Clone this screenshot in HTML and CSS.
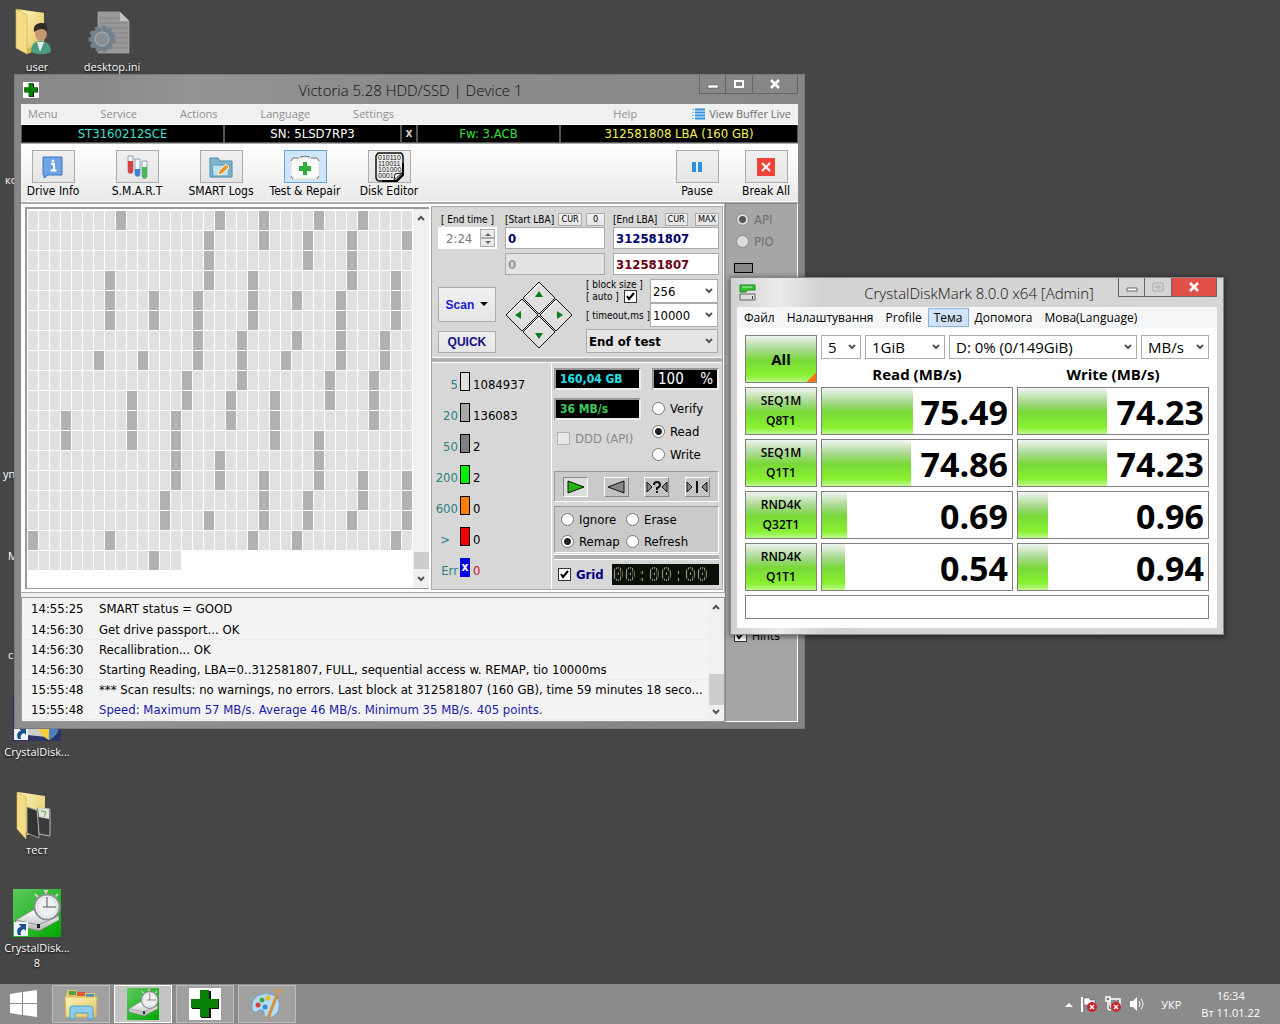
FILE: index.html
```html
<!DOCTYPE html>
<html lang="uk">
<head>
    <meta charset="UTF-8">
    <meta name="viewport" content="width=device-width, initial-scale=1.0">
    <title>Desktop</title>
    <link rel="stylesheet" href="styles.css">
</head>
<body>
    <svg class="defs" aria-hidden="true">
        <defs>
            <linearGradient id="folderFill" x1="0" y1="0" x2="1" y2="1">
                <stop offset="0" stop-color="#fdf3b8"/>
                <stop offset="1" stop-color="#e2c45f"/>
            </linearGradient>
            <linearGradient id="greenFill" x1="0" y1="0" x2="1" y2="1">
                <stop offset="0" stop-color="#5fc95f"/>
                <stop offset="1" stop-color="#00a800"/>
            </linearGradient>
            <linearGradient id="driveFill" x1="0" y1="0" x2="0" y2="1">
                <stop offset="0" stop-color="#ffffff"/>
                <stop offset="1" stop-color="#b4b4b4"/>
            </linearGradient>
            <symbol id="diskmark" viewBox="0 0 48 48">
                <rect width="48" height="48" fill="url(#greenFill)"/>
                <path d="M3 31 L20 21 L46 27 L46 31 L26 42 L3 36Z" fill="url(#driveFill)" stroke="#777" stroke-width=".6"/>
                <path d="M3 31 L25 36 L46 27 M25 36 V42" fill="none" stroke="#888" stroke-width=".8"/>
                <rect x="24" y="35" width="3" height="4" fill="#222"/>
                <path d="M33 6V2M31 2h4M25 8l-3-3M42 8l3-3" stroke="#ccc" stroke-width="2"/>
                <circle cx="34" cy="18" r="12.500" fill="#eef0f2" stroke="#8b9196" stroke-width="2"/>
                <circle cx="34" cy="18" r="9.500" fill="none" stroke="#9aa" stroke-width="1" stroke-dasharray="1 2"/>
                <path d="M34 8V18H43M30 18h4" stroke="#555" stroke-width="1" fill="none"/>
            </symbol>
            <symbol id="shortcut" viewBox="0 0 14 14">
                <rect width="14" height="14" fill="#eef3f8"/>
                <path d="M4 13C2 8 4 5 7 5L5 2H12V9L10 7C7 8 6 10 7 13Z" fill="#1d4f8c"/>
            </symbol>
            <symbol id="cross" viewBox="0 0 32 32">
                <rect width="32" height="32" fill="#fff"/>
                <path d="M12 3h10v8h8v10h-8v9H12v-9H3V11h9z" fill="#111"/>
                <path d="M11 2h9v9h9v9h-9v9h-9v-9H2v-9h9z" fill="#088008"/>
            </symbol>
        </defs>
    </svg>

    <main class="desktop">
        <!-- desktop icons -->
        <a class="shortcut user" href="#">
            <svg width="48" height="48" viewBox="0 0 48 48">
                <path d="M5 1 L31 5 V40 L14 46Z" fill="#d7b84d"/>
                <path d="M7 2 L31 5 V38 L14 40Z" fill="url(#folderFill)"/>
                <path d="M3 1 L14 7 V46 L3 40Z" fill="#f5dd86" stroke="#d2b456" stroke-width=".7"/>
                <path d="M18 44C18 36 22 33 28 33S38 37 38 44C32 47 24 47 18 44Z" fill="#4a9c7d"/>
                <path d="M24 34l3 10 4-10z" fill="#e6f3f0"/>
                <ellipse cx="28" cy="25" rx="6" ry="8" fill="#c49873"/>
                <path d="M21 24C20 17 24 15 29 15S35 19 34 25C32 20 27 20 21 24Z" fill="#2e2a26"/>
            </svg>
            <span>user</span>
        </a>
        <a class="shortcut ini" href="#">
            <svg width="48" height="48" viewBox="0 0 48 48">
                <path d="M10 4H32L41 13V45H10Z" fill="#989898" stroke="#adadad" stroke-width=".7"/>
                <path d="M12 10h19M12 15h27M12 20h28M12 25h28M12 30h28M12 35h28M12 40h28" stroke="#848484" stroke-width="1"/>
                <path d="M32 4V13H41Z" fill="#c4c4c4"/>
                <circle cx="14" cy="31" r="9" fill="none" stroke="#75818d" stroke-width="5"/>
                <circle cx="14" cy="31" r="12" fill="none" stroke="#75818d" stroke-width="3" stroke-dasharray="4 3"/>
                <circle cx="14" cy="31" r="7" fill="#8c8f92" stroke="#a8b2bc"/>
            </svg>
            <span>desktop.ini</span>
        </a>
        <span class="hidden-label label-a">ко</span>
        <span class="hidden-label label-b">уп</span>
        <span class="hidden-label label-c">M</span>
        <span class="hidden-label label-d">с</span>
        <a class="shortcut info" href="#">
            <svg width="48" height="48" viewBox="0 0 48 48">
                <rect width="48" height="48" fill="#29356b"/>
                <path d="M10 30L40 38L34 44L14 42Z" fill="#ccc"/>
                <path d="M26 26h19v10c0 6-9 11-9 11s-10-5-10-11z" fill="#f3cf3c"/>
                <path d="M36 26h9v10c0 6-9 11-9 11z" fill="#4a7fc2"/>
                <use href="#shortcut" x="1" y="33" width="14" height="14"/>
            </svg>
            <span>CrystalDisk...</span>
        </a>
        <a class="shortcut test" href="#">
            <svg width="48" height="48" viewBox="0 0 48 48">
                <path d="M5 1L32 5V40L14 44Z" fill="url(#folderFill)"/>
                <path d="M14 16L26 20V47L14 42Z" fill="#333" stroke="#999" stroke-width="1"/>
                <path d="M24 17L37 18V45L26 43Z" fill="#3a3a3a" stroke="#bbb" stroke-width="1"/>
                <path d="M25 17L36 18V28L26 26Z" fill="#dfe8d8"/>
                <path d="M28 20l5 1-2 5" stroke="#5faa4c" fill="none"/>
                <path d="M4 1L13 6V48L4 38Z" fill="#f5dd86" stroke="#d2b456" stroke-width=".7"/>
            </svg>
            <span>тест</span>
        </a>
        <a class="shortcut mark" href="#">
            <svg width="48" height="48" viewBox="0 0 48 48">
                <use href="#diskmark" width="48" height="48"/>
                <use href="#shortcut" x="1" y="33" width="14" height="14"/>
            </svg>
            <span>CrystalDisk...<br>8</span>
        </a>

        <!-- Victoria -->
        <section class="window victoria">
            <header class="titlebar">
                <svg class="title-icon" width="16" height="16"><use href="#cross"/></svg>
                <h1>Victoria 5.28 HDD/SSD | Device 1</h1>
                <div class="win-buttons">
                    <button aria-label="Minimize"><svg width="12" height="12"><path d="M1 7h10v3H1z" fill="#fff" stroke="#555" stroke-width=".5"/></svg></button>
                    <button aria-label="Maximize"><svg width="12" height="12"><path d="M2 3h8v6H2z" fill="none" stroke="#fff" stroke-width="2"/></svg></button>
                    <button aria-label="Close" class="wide"><svg width="12" height="12"><path d="M2 2l8 8M10 2l-8 8" stroke="#fff" stroke-width="2.500"/></svg></button>
                </div>
            </header>
            <nav class="menubar">
                <a href="#">Menu</a>
                <a href="#">Service</a>
                <a href="#">Actions</a>
                <a href="#">Language</a>
                <a href="#">Settings</a>
                <a href="#" class="help">Help</a>
                <a href="#" class="buffer">
                    <svg width="13" height="13"><path d="M3 1.500h10M3 4.500h10M3 7.500h10M3 10.500h10" stroke="#2e90e0" stroke-width="2"/><path d="M0 1.500h2M0 4.500h2M0 7.500h2M0 10.500h2" stroke="#7ab8ea" stroke-width="1"/></svg>
                    View Buffer Live
                </a>
            </nav>
            <div class="drive-bar">
                <span class="cyan">ST3160212SCE</span>
                <span>SN: 5LSD7RP3</span>
                <button>x</button>
                <span class="green">Fw: 3.ACB</span>
                <span class="yellow">312581808 LBA (160 GB)</span>
            </div>
            <div class="toolbar">
                <label class="tool"><button><svg width="22" height="24"><path d="M1 2h19v18H6l-4 3v-3H1z" fill="#6fa3e6" stroke="#3d74bb"/><circle cx="11" cy="6" r="1.500" fill="#fff"/><path d="M9 9h3v6M8.500 15.500h6" stroke="#fff" stroke-width="2" fill="none"/></svg></button><span>Drive Info</span></label>
                <label class="tool"><button><svg width="22" height="26"><g stroke="#8fa3b5" stroke-width="1"><path d="M2 2h5v15a2.500 2.500 0 0 1-5 0z" fill="#f3f6fa"/><path d="M9 5h5v15a2.500 2.500 0 0 1-5 0z" fill="#f3f6fa"/><path d="M16 7h5v15a2.500 2.500 0 0 1-5 0z" fill="#f3f6fa"/></g><path d="M2 7h5v10a2.500 2.500 0 0 1-5 0z" fill="#dd4040"/><path d="M9 15h5v5a2.500 2.500 0 0 1-5 0z" fill="#3f80d0"/><path d="M16 13h5v9a2.500 2.500 0 0 1-5 0z" fill="#48b858"/></svg></button><span>S.M.A.R.T</span></label>
                <label class="tool"><button><svg width="26" height="24"><path d="M2 3h8l2 3h12v16H2z" fill="#7fb4cc" stroke="#4c88a5"/><path d="M4 10h18l-2 11H5z" fill="#bfe0ee" stroke="#5f9bb7"/><path d="M10 20l1-4 7-7 3 3-7 7z" fill="#ef9420" stroke="#fff" stroke-width=".8"/></svg></button><span>SMART Logs</span></label>
                <label class="tool active"><button><svg width="32" height="28"><rect x="2" y="5" width="28" height="21" rx="2" fill="#fafafa" stroke="#dcdcdc"/><path d="M2 8l2-3h6M30 8l-2-3h-6M11 4q5-2 10 0M2 23l2 3M30 23l-2 3" fill="none" stroke="#777"/><path d="M14 9h4v4h4v5h-4v4h-4v-4h-4v-5h4z" fill="#2fae3e"/></svg></button><span>Test &amp; Repair</span></label>
                <label class="tool"><button><svg width="32" height="32"><path d="M5 2h23q2 1 2 4v17l-7 7H7q-4 0-4-4V5z" fill="#eee" stroke="#111" stroke-width="1.500"/><path d="M30 12v12l-6 6H9" fill="none" stroke="#000" stroke-width="2"/><g font-family="Liberation Sans" font-size="7" fill="#222"><text x="5" y="9">010110</text><text x="5" y="15">110011</text><text x="5" y="21">101000</text><text x="5" y="27">0001</text></g><path d="M21 29l1-6 7-1z" fill="#fff" stroke="#111"/></svg></button><span>Disk Editor</span></label>
                <label class="tool first-right"><button><svg width="12" height="12"><path d="M1 1h4v10H1zM7 1h4v10H7z" fill="#2f8fdf"/></svg></button><span>Pause</span></label>
                <label class="tool near"><button><svg width="18" height="18"><path d="M0 0h18v18H0z" fill="#ec4238"/><path d="M5 5l8 8M13 5l-8 8" stroke="#fff" stroke-width="2"/></svg></button><span>Break All</span></label>
            </div>

            <div class="client">
                <div class="left">
                    <div class="work">
                        <div class="map">
                            <div class="blocks" id="blocks"></div>
                            <div class="scroll">
                                <svg width="8" height="6"><path d="M1 5l3-3 3 3" fill="none" stroke="#555" stroke-width="2"/></svg>
                                <i></i>
                                <svg width="8" height="6"><path d="M1 1l3 3 3-3" fill="none" stroke="#555" stroke-width="2"/></svg>
                            </div>
                        </div>
                        <div class="controls">
                            <div class="range">
                                <div class="col">
                                    <label for="endTime" class="cap">[ End time ]</label>
                                    <div class="spin">
                                        <input id="endTime" value="2:24" disabled>
                                        <div class="spin-buttons">
                                            <button aria-label="Up"><svg width="6" height="4"><path d="M0 4l3-3 3 3z" fill="#666"/></svg></button>
                                            <button aria-label="Down"><svg width="6" height="4"><path d="M0 0l3 3 3-3z" fill="#666"/></svg></button>
                                        </div>
                                    </div>
                                </div>
                                <div class="col">
                                    <div class="cap"><label for="startLba">[Start LBA]</label><button>CUR</button><button>0</button></div>
                                    <input id="startLba" class="lba" value="0">
                                    <input class="lba off" aria-label="Current start" value="0" disabled>
                                </div>
                                <div class="col">
                                    <div class="cap"><label for="endLba">[End LBA]</label><button>CUR</button><button>MAX</button></div>
                                    <input id="endLba" class="lba" value="312581807">
                                    <input class="lba last" aria-label="Current end" value="312581807">
                                </div>
                            </div>
                            <div class="run">
                                <div class="run-buttons">
                                    <button class="scan">Scan <svg width="8" height="5"><path d="M0 0h8l-4 4z" fill="#000"/></svg></button>
                                    <button class="quick">QUICK</button>
                                </div>
                                <svg class="dpad" width="68" height="68" viewBox="0 0 68 68">
                                    <g fill="#e0e0e0" stroke="#111" stroke-width="1">
                                        <path d="M34 1L50 17 34 33 18 17z"/>
                                        <path d="M17 18L33 34 17 50 1 34z"/>
                                        <path d="M51 18L67 34 51 50 35 34z"/>
                                        <path d="M34 35L50 51 34 67 18 51z"/>
                                    </g>
                                    <path d="M20 17L34 3M3 34L17 20M37 34L51 20M20 51L34 37" stroke="#fff"/>
                                    <path d="M34 10l4 6h-8zM34 58l4-6h-8zM10 34l6-4v8zM58 34l-6-4v8z" fill="#0d7a1e"/>
                                </svg>
                                <div class="options">
                                    <div class="size-row">
                                        <div class="auto">
                                            <label for="blockSize">[ block size ]</label>
                                            <div><label for="auto">[ auto ]</label><input type="checkbox" id="auto" checked></div>
                                        </div>
                                        <select id="blockSize"><option>256</option></select>
                                    </div>
                                    <div class="size-row">
                                        <label for="timeout">[ timeout,ms ]</label>
                                        <select id="timeout"><option>10000</option></select>
                                    </div>
                                    <select class="finish" aria-label="At end"><option>End of test</option></select>
                                </div>
                            </div>
                            <div class="divider"></div>
                            <div class="lower">
                                <table class="stats">
                                    <tr><th>5</th><td><i class="swatch s5"></i></td><td>1084937</td></tr>
                                    <tr><th>20</th><td><i class="swatch s20"></i></td><td>136083</td></tr>
                                    <tr><th>50</th><td><i class="swatch s50"></i></td><td>2</td></tr>
                                    <tr><th>200</th><td><i class="swatch s200"></i></td><td>2</td></tr>
                                    <tr><th>600</th><td><i class="swatch s600"></i></td><td>0</td></tr>
                                    <tr><th class="more">&gt;</th><td><i class="swatch sred"></i></td><td>0</td></tr>
                                    <tr><th>Err</th><td><i class="swatch serr">x</i></td><td class="red">0</td></tr>
                                </table>
                                <div class="modes">
                                    <div class="readout">
                                        <div class="lcds">
                                            <output class="lcd aqua">160,04 GB</output>
                                            <output class="lcd lime">36 MB/s</output>
                                            <label class="ddd"><input type="checkbox" disabled>DDD (API)</label>
                                        </div>
                                        <div class="kinds">
                                            <output class="lcd percent"><span>100</span><span>%</span></output>
                                            <label><input type="radio" name="kind">Verify</label>
                                            <label><input type="radio" name="kind" checked>Read</label>
                                            <label><input type="radio" name="kind">Write</label>
                                        </div>
                                    </div>
                                    <div class="inset player">
                                        <button class="pressed" aria-label="Forward"><svg width="20" height="16"><path d="M2 2l16 6-16 6z" fill="#23b50c" stroke="#111"/></svg></button>
                                        <button aria-label="Backward"><svg width="20" height="16"><path d="M18 2L2 8l16 6z" fill="#888" stroke="#111"/></svg></button>
                                        <button aria-label="Random"><svg width="24" height="16"><path d="M2 3l5 5-5 5zM22 3l-5 5 5 5z" fill="#888" stroke="#111"/><path d="M9 6q0-3 3-3t3 3q0 2-3 3v2M12 12v2" stroke="#111" stroke-width="2" fill="none"/></svg></button>
                                        <button aria-label="Butterfly"><svg width="24" height="16"><path d="M2 3l5 5-5 5zM22 3l-5 5 5 5z" fill="#888" stroke="#111"/><path d="M12 2v12" stroke="#111" stroke-width="2"/></svg></button>
                                    </div>
                                    <div class="inset errors">
                                        <label><input type="radio" name="onerr">Ignore</label>
                                        <label><input type="radio" name="onerr">Erase</label>
                                        <label><input type="radio" name="onerr" checked>Remap</label>
                                        <label><input type="radio" name="onerr">Refresh</label>
                                    </div>
                                    <div class="divider"></div>
                                    <div class="grid-row">
                                        <label><input type="checkbox" checked>Grid</label>
                                        <output class="timer"><span>00:00:00</span></output>
                                    </div>
                                </div>
                            </div>
                        </div>
                    </div>
                    <div class="log">
                        <table>
                            <tr><td>14:55:25</td><td>SMART status = GOOD</td></tr>
                            <tr><td>14:56:30</td><td>Get drive passport... OK</td></tr>
                            <tr><td>14:56:30</td><td>Recallibration... OK</td></tr>
                            <tr><td>14:56:30</td><td>Starting Reading, LBA=0..312581807, FULL, sequential access w. REMAP, tio 10000ms</td></tr>
                            <tr><td>15:55:48</td><td>*** Scan results: no warnings, no errors. Last block at 312581807 (160 GB), time 59 minutes 18 seco...</td></tr>
                            <tr><td>15:55:48</td><td class="speed">Speed: Maximum 57 MB/s. Average 46 MB/s. Minimum 35 MB/s. 405 points.</td></tr>
                        </table>
                        <div class="scroll">
                            <svg width="8" height="6"><path d="M1 5l3-3 3 3" fill="none" stroke="#555" stroke-width="2"/></svg>
                            <i></i>
                            <svg width="8" height="6"><path d="M1 1l3 3 3-3" fill="none" stroke="#555" stroke-width="2"/></svg>
                        </div>
                    </div>
                </div>
                <aside class="side">
                    <label class="off"><input type="radio" name="bus" checked disabled>API</label>
                    <label class="off"><input type="radio" name="bus" disabled>PIO</label>
                    <i class="led"></i>
                    <label class="hints"><input type="checkbox" checked>Hints</label>
                </aside>
            </div>
        </section>

        <!-- CrystalDiskMark -->
        <section class="window crystal">
            <header class="titlebar">
                <svg class="title-icon" width="18" height="18"><path d="M1 1h15v5H8l-1 2H1z" fill="#35c435" stroke="#178a17"/><path d="M3 3h10" stroke="#b8f0b8"/><path d="M1 10h15v6H1z" fill="#ddd" stroke="#666"/><path d="M13 12h1v3h-1z" fill="#333"/></svg>
                <h1>CrystalDiskMark 8.0.0 x64 [Admin]</h1>
                <div class="win-buttons">
                    <button aria-label="Minimize"><svg width="14" height="12"><path d="M2 7h10v3H2z" fill="#fff" stroke="#666"/></svg></button>
                    <button aria-label="Maximize" disabled><svg width="12" height="12"><path d="M1 2h10v8H1zM4 5h4v2H4z" fill="none" stroke="#aaa"/></svg></button>
                    <button aria-label="Close" class="wide close"><svg width="12" height="12"><path d="M2 2l8 8M10 2l-8 8" stroke="#fff" stroke-width="2.500"/></svg></button>
                </div>
            </header>
            <nav class="menubar">
                <a href="#">Файл</a>
                <a href="#">Налаштування</a>
                <a href="#">Profile</a>
                <a href="#" class="hot">Тема</a>
                <a href="#">Допомога</a>
                <a href="#">Мова(Language)</a>
            </nav>
            <div class="bench">
                <table>
                    <tr class="picks">
                        <td rowspan="2"><button class="go all">All</button></td>
                        <td colspan="2">
                            <div class="selects">
                                <select class="count" aria-label="Count"><option>5</option></select>
                                <select class="size" aria-label="Size"><option>1GiB</option></select>
                                <select class="drive" aria-label="Drive"><option>D: 0% (0/149GiB)</option></select>
                                <select class="unit" aria-label="Unit"><option>MB/s</option></select>
                            </div>
                        </td>
                    </tr>
                    <tr class="heads"><th>Read (MB/s)</th><th>Write (MB/s)</th></tr>
                    <tr>
                        <td><button class="go">SEQ1M<br>Q8T1</button></td>
                        <td><div class="score"><i style="width: 48%"></i>75.49</div></td>
                        <td><div class="score"><i style="width: 47%"></i>74.23</div></td>
                    </tr>
                    <tr>
                        <td><button class="go">SEQ1M<br>Q1T1</button></td>
                        <td><div class="score"><i style="width: 47%"></i>74.86</div></td>
                        <td><div class="score"><i style="width: 47%"></i>74.23</div></td>
                    </tr>
                    <tr>
                        <td><button class="go">RND4K<br>Q32T1</button></td>
                        <td><div class="score"><i style="width: 13%"></i>0.69</div></td>
                        <td><div class="score"><i style="width: 16%"></i>0.96</div></td>
                    </tr>
                    <tr>
                        <td><button class="go">RND4K<br>Q1T1</button></td>
                        <td><div class="score"><i style="width: 12%"></i>0.54</div></td>
                        <td><div class="score"><i style="width: 16%"></i>0.94</div></td>
                    </tr>
                </table>
                <input class="comment" aria-label="Comment">
            </div>
        </section>
    </main>

    <footer class="taskbar">
        <button class="start" aria-label="Start"><svg width="28" height="28"><path d="M0 4l12-2v11H0zM13 2l14-2v13H13zM0 14h12v11L0 23zM13 14h14v13l-14-2z" fill="#fff"/></svg></button>
        <button class="task" aria-label="Explorer"><svg width="34" height="32"><path d="M2 6l2-4h8l2 3h17v24H2z" fill="#e5c766"/><path d="M5 3h7v4H5z" fill="#4ba04b"/><path d="M13 4h8v4h-8z" fill="#d55d3a"/><path d="M22 6h8v3h-8z" fill="#4590c8"/><path d="M1 9h32l-1 20H2z" fill="url(#folderFill)" stroke="#d4b75a"/><path d="M6 31V20q0-2 3-2h17q3 0 3 2v11h-5v-6H11v6z" fill="#8fcbed" stroke="#4aa0cf"/></svg></button>
        <button class="task current" aria-label="CrystalDiskMark"><svg width="32" height="32"><use href="#diskmark"/></svg></button>
        <button class="task" aria-label="Victoria"><svg width="32" height="32"><use href="#cross"/></svg></button>
        <button class="task" aria-label="Paint"><svg width="34" height="32"><path d="M2 18C2 9 10 5 19 6s11 7 10 14-8 11-13 9c-4-2 0-6-4-7s-4 3-7 2-3-3-3-6z" fill="#b4dcf4" stroke="#6fa6cc"/><circle cx="8" cy="17" r="2.500" fill="#d8413a"/><circle cx="12" cy="12" r="2.500" fill="#3fa548"/><circle cx="18" cy="10" r="2.500" fill="#f0b92c"/><circle cx="15" cy="19" r="2.500" fill="#4288c8"/><path d="M27 7L18 30" stroke="#e08a32" stroke-width="3"/><path d="M24 2q5-3 9 0l-5 6z" fill="#c49a67"/></svg></button>
        <div class="tray">
            <svg width="8" height="5"><path d="M0 5l4-4 4 4z" fill="#fff"/></svg>
            <svg width="16" height="16"><path d="M1 1v15" stroke="#fff" stroke-width="2"/><path d="M3 2h6v2h5v7H8V9H3z" fill="#fff" stroke="#555" stroke-width=".5"/><circle cx="11" cy="11" r="5" fill="#c8262c"/><path d="M9 9l4 4M13 9l-4 4" stroke="#fff" stroke-width="1.500"/></svg>
            <svg width="16" height="16"><path d="M5 3h10v8H5zM7 14h5" fill="none" stroke="#fff" stroke-width="1.500"/><path d="M1 1h4v4H1zM3 5v7q0 2 3 2" fill="#777" stroke="#fff" stroke-width="1.500"/><circle cx="11" cy="11" r="5" fill="#c8262c"/><path d="M9 9l4 4M13 9l-4 4" stroke="#fff" stroke-width="1.500"/></svg>
            <svg width="16" height="16"><path d="M1 5h3l4-4v14l-4-4H1z" fill="#fff"/><path d="M10 5q2 3 0 6M12 3q4 5 0 10" fill="none" stroke="#fff" stroke-width="1"/></svg>
            <span class="lang">УКР</span>
            <time>16:34<br>Вт 11.01.22</time>
        </div>
    </footer>
    <script src="script.js"></script>
</body>
</html>
```

FILE: script.js
```js
// slow blocks by row, every other block is fast
const slow = [
    [8, 17, 21, 26, 30],
    [16, 21, 25, 29, 34],
    [16, 25, 29],
    [7, 16, 20, 29, 33],
    [7, 11, 15, 20, 24, 28, 33],
    [7, 11, 15, 20, 28, 33],
    [15, 19, 24, 28, 32],
    [6, 10, 15, 19, 23, 28, 32],
    [14, 19, 27, 31],
    [9, 14, 18, 22, 27, 31],
    [3, 9, 13, 18, 22, 31],
    [3, 9, 13, 22, 26],
    [13, 17, 26],
    [13, 17, 21, 26, 30, 34],
    [12, 21, 25, 30, 34],
    [12, 16, 21, 25, 29, 34],
    [0, 7, 20, 24, 33],
    [11]
];
const columns = 35;
const lastRow = 14;
const blocks = document.getElementById('blocks');

slow.forEach((marks, row) => {
    const count = row === slow.length - 1 ? lastRow : columns;
    for (let i = 0; i < count; i++) {
        const cell = document.createElement('i');
        if (marks.includes(i)) cell.className = 'slow';
        blocks.appendChild(cell);
    }
});
```

FILE: styles.css
```css
* {
    box-sizing: border-box;
}
body {
    margin: 0;
    min-height: 100vh;
    display: flex;
    flex-direction: column;
    background: #464646;
    font-family: "DejaVu Sans Condensed", "Open Sans", sans-serif;
    font-size: 12px;
    color: #000;
    overflow: hidden;
}
button, input, select {
    font: inherit;
    color: inherit;
    margin: 0;
    padding: 0;
    border-radius: 0;
}
button {
    display: flex;
    align-items: center;
    justify-content: center;
    border: 1px solid #acacac;
    background: linear-gradient(#f0f0f0, #e5e5e5);
}
a {
    color: inherit;
    text-decoration: none;
}
svg {
    flex: none;
}
table {
    border-collapse: collapse;
}
td, th {
    padding: 0;
}
.defs {
    position: absolute;
    width: 0;
    height: 0;
}
select {
    appearance: none;
    border: 1px solid #acacac;
    background: #fff url("data:image/svg+xml,%3Csvg xmlns='http://www.w3.org/2000/svg' width='8' height='6'%3E%3Cpath d='M1 1l3 3 3-3' fill='none' stroke='%23555' stroke-width='2'/%3E%3C/svg%3E") no-repeat right 4px center;
}
input[type="radio"], input[type="checkbox"] {
    appearance: none;
    flex: none;
    width: 13px;
    height: 13px;
    border: 1px solid #777;
    background: #fff;
}
input[type="radio"] {
    border-radius: 50%;
}
input[type="radio"]:checked {
    background: radial-gradient(circle, #222 0 3px, #fff 4px);
}
input[type="checkbox"]:checked {
    border-color: #333;
    background: #fff url("data:image/svg+xml,%3Csvg xmlns='http://www.w3.org/2000/svg' width='9' height='9'%3E%3Cpath d='M1 4l2 3 5-6' fill='none' stroke='%23000' stroke-width='2'/%3E%3C/svg%3E") no-repeat center;
}

/* desktop */
.desktop {
    position: relative;
    flex: 1;
}
.shortcut {
    position: absolute;
    width: 74px;
    display: flex;
    flex-direction: column;
    align-items: center;
    gap: 3px;
    color: #fff;
    font-family: "Open Sans", sans-serif;
    font-size: 11px;
    line-height: 15px;
    text-align: center;
    text-shadow: 0 1px 2px #000;
}
.user { left: 0; top: 8px; }
.ini { left: 75px; top: 8px; }
.info { left: 0; top: 693px; }
.test { left: 0; top: 791px; }
.mark { left: 0; top: 889px; }
.hidden-label {
    position: absolute;
    color: #fff;
    font-family: "Open Sans", sans-serif;
    font-size: 11px;
    line-height: 15px;
}
.label-a { left: 5px; top: 172px; }
.label-b { left: 3px; top: 466px; }
.label-c { left: 8px; top: 548px; }
.label-d { left: 8px; top: 647px; }

/* windows */
.window {
    position: absolute;
    padding: 0 6px 6px;
}
.titlebar {
    display: flex;
    align-items: center;
    height: 29px;
}
.titlebar h1 {
    flex: 1;
    margin: 0;
    padding-left: 83px;
    text-align: center;
    font: 300 15px/26px "Open Sans", sans-serif;
    color: #111;
}
.win-buttons {
    display: flex;
    align-self: flex-start;
}
.win-buttons button {
    width: 27px;
    height: 19px;
    border: 1px solid #666;
    border-top: 0;
    background: none;
}
.win-buttons button + button {
    border-left: 0;
}
.win-buttons .wide {
    width: 45px;
}
.menubar {
    display: flex;
    align-items: center;
    height: 20px;
}
.scroll {
    width: 16px;
    display: flex;
    flex-direction: column;
    align-items: center;
    justify-content: space-between;
    padding: 6px 0;
    background: #f0f0f0;
}
.scroll i {
    width: 15px;
    background: #cdcdcd;
    margin-top: auto;
}

/* Victoria */
.victoria {
    left: 14px;
    top: 74px;
    width: 791px;
    background: linear-gradient(100deg, #868686, #8a8a8a 10%, #949494 20%, #8c8c8c 40%, #858585);
    border: 1px solid #7a7a7a;
}
.victoria .title-icon {
    margin-left: 2px;
}
.victoria .menubar {
    gap: 43px;
    padding: 0 7px;
    background: #f0f0f0;
    color: #8f8f8f;
    font-family: "Open Sans", sans-serif;
    font-size: 11px;
    line-height: 18px;
}
.victoria .help {
    margin-left: auto;
}
.buffer {
    display: flex;
    align-items: center;
    gap: 4px;
    margin-left: 12px;
    color: #6d6d6d;
}
.drive-bar {
    display: grid;
    grid-template-columns: 201px 175px 14px 141px 1fr;
    gap: 2px;
    padding: 0 1px 1px;
    background: #555;
    border-top: 1px solid #fff;
    color: #fff;
    font-size: 13px;
    line-height: 17px;
    text-align: center;
}
.drive-bar span, .drive-bar button {
    background: #000;
}
.drive-bar button {
    border: 0;
    color: #ccc;
    font-size: 12px;
    font-weight: bold;
}
.cyan { color: #3fe0d0; }
.green { color: #35e035; }
.yellow { color: #f4f45a; }
.toolbar {
    display: flex;
    gap: 20px;
    height: 60px;
    padding-top: 6px;
    background: linear-gradient(#fff, #e9e9e9);
    border: solid #aaa;
    border-width: 1px 0;
    box-shadow: inset 0 -1px #fff;
}
.tool {
    width: 64px;
    display: flex;
    flex-direction: column;
    align-items: center;
    white-space: nowrap;
    line-height: 17px;
}
.tool button {
    width: 43px;
    height: 33px;
}
.tool.active button {
    border-color: #6aa4dc;
    background: #cfe5fb;
}
.first-right {
    margin-left: auto;
}
.near {
    margin-left: -15px;
}
.client {
    display: flex;
    background: #f0f0f0;
}
.left {
    flex: 1;
    min-width: 0;
}
.work {
    display: flex;
    gap: 1px;
    padding: 2px;
    border: solid #aaa;
    border-width: 1px 1px 1px 0;
    background: #fff;
    margin-bottom: 4px;
}
.map {
    display: flex;
    flex: 1;
    border: 2px solid #999;
    border-width: 2px 0 1px 2px;
    margin: 1px 1px 1px 2px;
    background: #fff;
}
.blocks {
    flex: 1;
    display: grid;
    grid-template-columns: repeat(35, 10px);
    grid-auto-rows: 19px;
    align-content: start;
    gap: 1px;
    padding: 2px 1px;
}
.blocks i {
    background: #e0e0e0;
}
.blocks .slow {
    background: #b1b1b1;
}
.map .scroll i {
    height: 17px;
    margin-bottom: 7px;
}
.controls {
    width: 292px;
    background: #d7d7d7;
    border: 1px solid #aaa;
}
.range {
    display: grid;
    grid-template-columns: 59px 100px 106px;
    gap: 8px;
    padding: 5px 0 0 6px;
}
.col {
    display: flex;
    flex-direction: column;
    gap: 4px;
}
.cap {
    height: 14px;
    margin-bottom: -3px;
    display: flex;
    align-items: center;
    justify-content: space-between;
    white-space: nowrap;
    font-size: 10px;
}
label.cap {
    justify-content: center;
}
.cap button {
    min-width: 19px;
    height: 13px;
    padding: 0 2px;
    font-size: 9px;
}
.spin {
    display: flex;
    align-items: center;
    height: 22px;
    background: #fff;
    color: #777;
}
.spin input {
    width: 42px;
    border: 0;
    padding-left: 8px;
    background: none;
    font-size: 13px;
}
.spin-buttons button {
    width: 15px;
    height: 9px;
}
.lba {
    width: 100%;
    height: 22px;
    border: 1px solid #aaa;
    padding: 0 2px;
    background: #fff;
    font-weight: bold;
    font-size: 13px;
    color: #00006b;
}
.lba.off {
    background: #e3e3e3;
    color: #999;
}
.lba.last {
    color: #6b0010;
}
.run {
    display: flex;
    padding: 4px 4px 4px 6px;
}
.run-buttons {
    width: 59px;
    display: flex;
    flex-direction: column;
    justify-content: space-between;
    padding-top: 8px;
    font-family: "Liberation Sans", sans-serif;
    font-weight: bold;
}
.scan {
    height: 35px;
    gap: 6px;
    color: #1a1ad0;
}
.quick {
    height: 22px;
    color: #101080;
}
.dpad {
    margin: 2px 0 0 9px;
}
.options {
    flex: 1;
    display: flex;
    flex-direction: column;
    margin-left: 13px;
}
.size-row {
    display: flex;
    justify-content: space-between;
    align-items: center;
    font-size: 10px;
    white-space: nowrap;
}
.size-row select {
    width: 68px;
    height: 24px;
    padding-left: 2px;
    font-size: 13px;
}
.auto div {
    display: flex;
    align-items: center;
    gap: 5px;
}
.finish {
    height: 24px;
    margin-top: 2px;
    padding-left: 2px;
    background-color: #e5e5e5;
    font-weight: bold;
    font-size: 13px;
}
.divider {
    height: 6px;
    background: #b0b0b0;
    border-bottom: 1px solid #fff;
    border-top: 1px solid #fff;
}
.lower {
    display: flex;
}
.stats {
    width: 119px;
    align-self: flex-start;
    margin-top: 3px;
    font-size: 13px;
}
.stats tr {
    height: 31px;
}
.stats th {
    width: 26px;
    text-align: right;
    font-weight: normal;
    color: #2a8080;
    padding-top: 6px;
}
.stats td {
    width: 14px;
}
.stats td:last-child {
    width: auto;
    padding: 6px 0 0 1px;
}
.stats .more {
    padding-right: 8px;
}
.red {
    color: #d02020;
}
.swatch {
    display: block;
    width: 10px;
    height: 19px;
    margin: 0 auto;
    border: 1px solid #000;
}
.s5 { background: #e0e0e0; }
.s20 { background: #a8a8a8; }
.s50 { background: #808080; }
.s200 { background: #00f000; }
.s600 { background: #ff8000; }
.sred { background: #f00000; }
.serr {
    border: 0;
    background: #0000e0;
    color: #fff;
    font: bold 12px/19px "DejaVu Sans Condensed", sans-serif;
    text-align: center;
}
.modes {
    flex: 1;
    padding: 5px 3px 0 2px;
    border-left: 1px solid #fff;
}
.modes label {
    display: flex;
    align-items: center;
    gap: 5px;
    height: 22px;
    font-size: 13px;
}
.readout {
    display: flex;
    justify-content: space-between;
    height: 103px;
}
.lcd {
    display: block;
    height: 22px;
    border: 2px solid #eee;
    border-left-color: #999;
    border-top-color: #999;
    padding: 0 4px;
    background: #000;
    font-weight: bold;
    line-height: 18px;
}
.lcds {
    width: 87px;
    display: flex;
    flex-direction: column;
    gap: 8px;
}
.lcd.aqua {
    color: #20e0e8;
}
.lcd.lime {
    color: #3cc85c;
}
.modes .ddd {
    height: 20px;
    margin-left: 3px;
    color: #888;
}
.ddd input {
    opacity: .4;
}
.kinds {
    width: 67px;
}
.kinds label {
    height: 23px;
}
.lcd.percent {
    display: flex;
    justify-content: space-between;
    margin-bottom: 7px;
    color: #fff;
    font-weight: normal;
    font-size: 15px;
}
.inset {
    border: 1px solid #999;
    border-right-color: #fff;
    border-bottom-color: #fff;
    background: #cacaca;
}
.player {
    display: flex;
    align-items: center;
    justify-content: space-between;
    height: 31px;
    padding: 0 8px;
    margin-bottom: 4px;
}
.player button {
    width: 25px;
    height: 20px;
    border-color: #fff #888 #888 #fff;
    background: #c4c4c4;
}
.player .pressed {
    border-color: #888 #fff #fff #888;
    background: #ddd;
}
.errors {
    display: grid;
    grid-template-columns: 65px 1fr;
    padding: 1px 0 0 6px;
    margin-bottom: 1px;
}
.grid-row {
    display: flex;
    justify-content: space-between;
    align-items: center;
    height: 29px;
    padding-left: 4px;
    color: #000080;
    font-weight: bold;
}
.timer {
    width: 107px;
    height: 21px;
    background: #081008;
    font: 20px/20px "DejaVu Sans Mono", monospace;
}
.timer span {
    background: repeating-linear-gradient(90deg, #9a9a70 0 1px, #222 1px 2px);
    background-clip: text;
    color: transparent;
}
.log {
    display: flex;
    border: 1px solid #999;
    background: #f3f3f3;
    font-size: 13px;
}
.log table {
    flex: 1;
    margin: 1px 0;
}
.log tr {
    height: 20px;
    border-bottom: 1px solid #ececec;
}
.log td {
    white-space: nowrap;
}
.log td:first-child {
    width: 77px;
    padding-left: 9px;
}
.log .speed {
    color: #1a1aa8;
}
.log .scroll i {
    height: 31px;
    margin-bottom: 4px;
}
.side {
    width: 73px;
    display: flex;
    flex-direction: column;
    padding: 4px 0 0 10px;
    background: #a6a6a6;
    border: 1px solid #fff;
    border-top-color: #888;
    border-left-color: #888;
}
.side label {
    display: flex;
    align-items: center;
    gap: 5px;
    height: 22px;
}
.side .off {
    color: #6f6f6f;
    font-size: 13px;
}
.side .off input {
    opacity: .6;
}
.led {
    width: 19px;
    height: 10px;
    margin: 11px 0 0 -2px;
    border: 1px solid #000;
    background: #888;
}
.side .hints {
    margin: auto 0 74px -2px;
}

/* CrystalDiskMark */
.crystal {
    left: 730px;
    top: 277px;
    width: 494px;
    background: linear-gradient(90deg, #d0d0d0, #ebebeb 10%, #d2d2d2 18%, #d6d6d6);
    border: 1px solid #888;
    box-shadow: 0 1px 6px rgba(0, 0, 0, 0.6);
}
.crystal .title-icon {
    margin-left: 2px;
}
.crystal .menubar {
    height: 21px;
    padding-left: 1px;
    background: #f5f6f7;
    font-family: "Open Sans", sans-serif;
}
.crystal .menubar a {
    padding: 0 5px;
    line-height: 17px;
    border: 1px solid transparent;
}
.crystal .menubar .hot {
    border-color: #8ab0dc;
    background: #d0e3f8;
}
.crystal .close {
    background: #e05048;
}
.bench {
    padding: 3px 8px 9px;
    background: #fff;
    font-family: "Open Sans", sans-serif;
}
.bench table {
    width: calc(100% + 8px);
    margin: 0 -4px;
    border-collapse: separate;
    border-spacing: 4px;
    table-layout: fixed;
}
.bench td:first-child {
    width: 72px;
}
.selects {
    display: flex;
    gap: 4px;
}
.selects select {
    height: 24px;
    padding-left: 6px;
    font-size: 15px;
    line-height: 20px;
}
.count { width: 40px; }
.size { width: 80px; }
.drive { flex: 1; }
.unit { width: 68px; }
.heads th {
    height: 20px;
    padding-top: 3px;
    font-size: 15px;
    line-height: 17px;
}
.go {
    width: 100%;
    height: 48px;
    border: 1px solid #808080;
    background: linear-gradient(#ecf4ec, #a8d890 30%, #78d838 52%, #88f030 85%, #b8f888);
    font-weight: 600;
    line-height: 20px;
}
.go.all {
    background: linear-gradient(135deg, transparent 90%, #f07818 90%) right bottom / 48px 48px no-repeat, linear-gradient(#ecf4ec, #a8d890 30%, #78d838 52%, #88f030 85%, #b8f888);
    font-size: 15px;
    font-weight: bold;
}
.score {
    position: relative;
    height: 48px;
    padding-right: 4px;
    border: 1px solid #808080;
    font-size: 34px;
    font-weight: bold;
    line-height: 48px;
    text-align: right;
}
.score i {
    position: absolute;
    left: 0;
    top: 0;
    bottom: 0;
    background: linear-gradient(#f2f6f2, #a8d890 30%, #78d838 52%, #88f030 85%, #c0f890);
}
.comment {
    display: block;
    width: 100%;
    height: 24px;
    border: 1px solid #808080;
}

/* taskbar */
.taskbar {
    position: relative;
    display: flex;
    align-items: center;
    gap: 4px;
    height: 40px;
    background: #8b8b8b;
    color: #fff;
    font-family: "Open Sans", sans-serif;
    font-size: 11px;
}
.start {
    width: 48px;
    border: 0;
    background: none;
}
.task {
    width: 58px;
    height: 38px;
    border: 1px solid #bdbdbd;
    background: #a0a0a0;
}
.task.current {
    border-color: #fff;
    background: #c4c4c4;
}
.tray {
    margin-left: auto;
    padding-right: 20px;
    display: flex;
    align-items: center;
    gap: 8px;
}
.lang {
    margin: 0 12px 0 8px;
}
.tray time {
    line-height: 17px;
    text-align: center;
}
```
